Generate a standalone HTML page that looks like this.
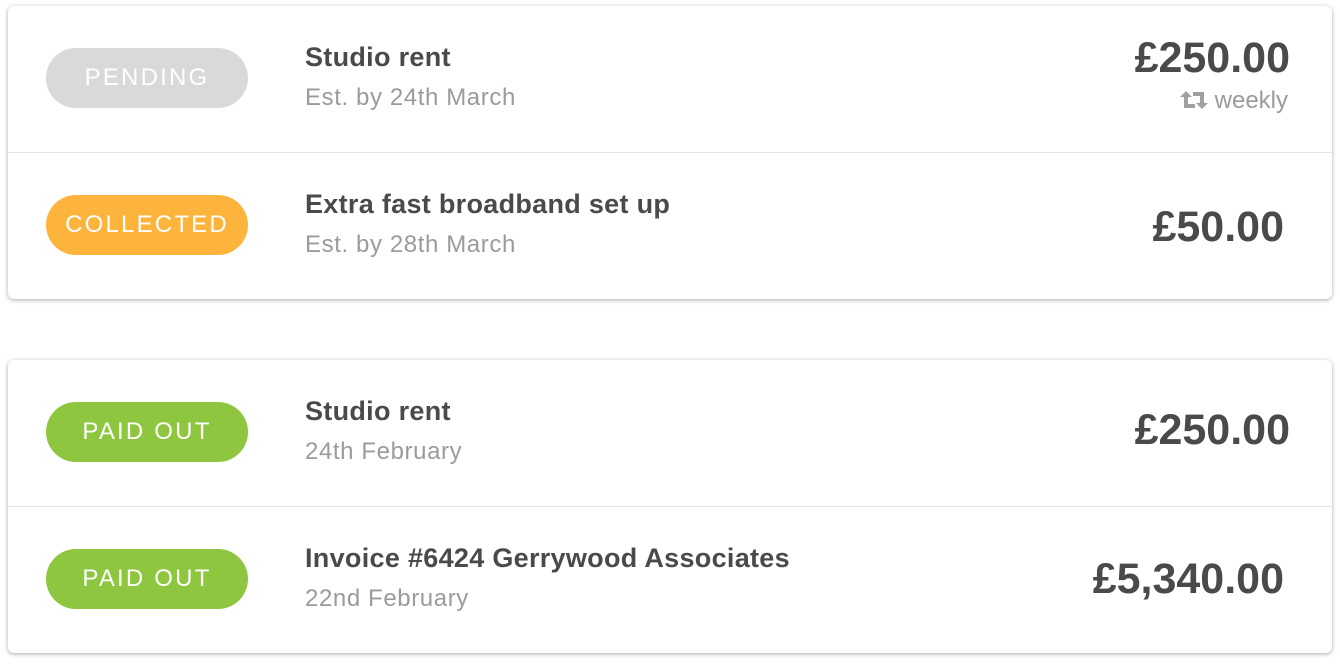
<!DOCTYPE html>
<html><head><style>
body{margin:0;width:1340px;height:664px;background:#fff;font-family:"Liberation Sans",Arial,sans-serif;position:relative;overflow:hidden}
.card{position:absolute;left:8px;width:1324px;background:#fff;border-radius:6px;box-shadow:0 1px 4px rgba(0,0,0,.35)}
.row{position:relative;height:146px}
.row+.row{border-top:1px solid #e2e2e2}
.pill{position:absolute;left:38px;top:42px;width:202px;height:60px;border-radius:30px;color:#fff;font-size:24px;letter-spacing:2.2px;text-align:center;line-height:60px}
.t{position:absolute;left:297px;top:36px;font-size:27px;font-weight:bold;color:#4a4a4a;letter-spacing:0.3px}
.s{position:absolute;left:297px;top:78px;font-size:24px;color:#9b9b9b;letter-spacing:0.6px}
.a{position:absolute;right:42px;font-size:43px;font-weight:bold;color:#4a4a4a}
.w{position:absolute;right:44px;top:81px;font-size:24px;color:#9b9b9b}
</style></head><body>
<div class="card" style="top:6px">
 <div class="row">
  <div class="pill" style="background:#d9d9d9">PENDING</div>
  <div class="t">Studio rent</div><div class="s">Est. by 24th March</div>
  <div class="a" style="top:28px">£250.00</div>
  <div class="w"><svg width="28" height="20" viewBox="0 0 28 20" style="vertical-align:-2px;margin-right:7px"><path d="M0 7 L6 1 L12 7 H8 V14 H15 V18 H4 V7 Z" fill="#a0a0a0"/><path d="M28 13 L22 19 L16 13 H20 V6 H13 V2 H24 V13 Z" fill="#a0a0a0"/></svg>weekly</div>
 </div>
 <div class="row">
  <div class="pill" style="background:#fdb43c">COLLECTED</div>
  <div class="t">Extra fast broadband set up</div><div class="s">Est. by 28th March</div>
  <div class="a" style="top:50px;right:48px">£50.00</div>
 </div>
</div>
<div class="card" style="top:360px">
 <div class="row">
  <div class="pill" style="background:#8ec63f">PAID OUT</div>
  <div class="t">Studio rent</div><div class="s">24th February</div>
  <div class="a" style="top:46px">£250.00</div>
 </div>
 <div class="row">
  <div class="pill" style="background:#8ec63f">PAID OUT</div>
  <div class="t">Invoice #6424 Gerrywood Associates</div><div class="s">22nd February</div>
  <div class="a" style="top:48px;right:48px">£5,340.00</div>
 </div>
</div>
</body></html>
